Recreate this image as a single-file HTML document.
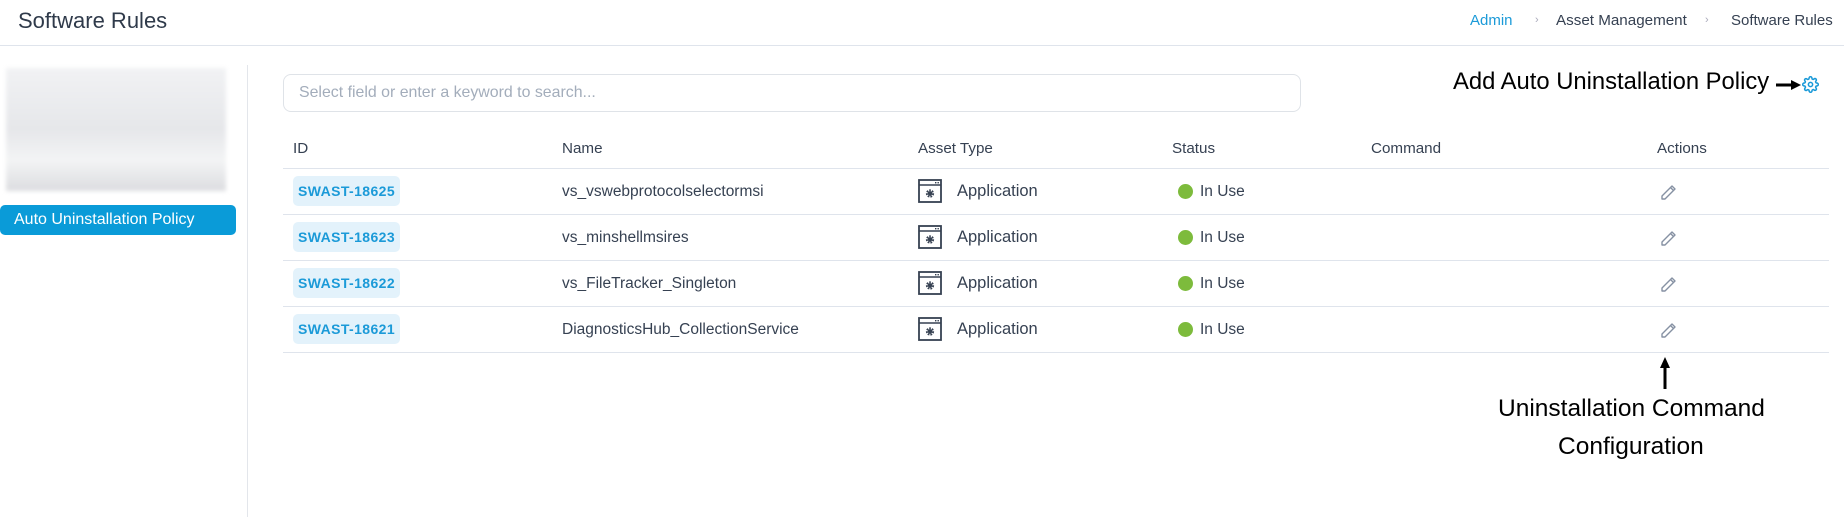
<!DOCTYPE html>
<html><head><meta charset="utf-8"><style>
*{margin:0;padding:0;box-sizing:border-box}
body{width:1844px;height:517px;background:#fff;font-family:"Liberation Sans",sans-serif;color:#364152;position:relative;overflow:hidden}
.a{position:absolute;white-space:nowrap}
.hl{position:absolute;height:1px;background:#dfe4ec}
.badge{position:absolute;left:293px;width:107px;height:30px;background:#e3f2fb;border-radius:5px;color:#1b9ad8;font-size:14px;font-weight:bold;line-height:30px;text-align:center;letter-spacing:.4px;white-space:nowrap}
.t{font-size:15.5px;color:#364152}
.ap{font-size:16.5px}
.iu{font-size:15.5px}
.dot{position:absolute;width:15px;height:15px;border-radius:50%;background:#7dbb3c}
.h{font-size:15.2px;top:140px}
</style></head><body>
<div class="a" style="left:18px;top:8px;font-size:22px;color:#2f3a4a">Software Rules</div>
<div class="a" style="left:1470px;top:12px;font-size:15px;color:#1b9ad8">Admin</div>
<div class="a" style="left:1535px;top:14px;font-size:11px;color:#aab">›</div>
<div class="a" style="left:1556px;top:12px;font-size:15.2px;color:#364152">Asset Management</div>
<div class="a" style="left:1705px;top:14px;font-size:11px;color:#aab">›</div>
<div class="a" style="left:1731px;top:12px;font-size:15px;color:#364152">Software Rules</div>
<div class="hl" style="left:0;top:45px;width:1844px"></div>
<div class="a" style="left:6px;top:68px;width:220px;height:123px;background:linear-gradient(180deg,#f1f2f4,#e6e7ea 50%,#f3f4f5 75%,#dcdde0);filter:blur(2px)"></div>
<div class="a" style="left:0;top:205px;width:236px;height:30px;background:#0a9bd8;border-radius:5px;color:#fff;font-size:16px;line-height:30px;padding-left:14px">Auto Uninstallation Policy</div>
<div class="a" style="left:247px;top:65px;width:1px;height:452px;background:#e3e6eb"></div>
<div class="a" style="left:283px;top:74px;width:1018px;height:38px;border:1px solid #dfe3e8;border-radius:8px;font-size:15.9px;color:#a3adbb;line-height:36px;padding-left:15px">Select field or enter a keyword to search...</div>
<div class="a" style="left:1453px;top:68px;font-size:23.8px;color:#000">Add Auto Uninstallation Policy</div>
<svg class="a" style="left:1776px;top:79px" width="26" height="12"><path d="M0 6H17" stroke="#000" stroke-width="3"/><path d="M15 1L25 6L15 11Z" fill="#000"/></svg>
<svg class="a" style="left:1802px;top:76px" width="17" height="17" viewBox="0 0 24 24" fill="none" stroke="#1b9ad8" stroke-width="2.2"><circle cx="12" cy="12" r="3"/><path d="M19.4 15a1.650 1.650 0 0 0 .33 1.820l.06.06a2 2 0 1 1-2.830 2.830l-.06-.06a1.650 1.650 0 0 0-1.820-.33 1.650 1.650 0 0 0-1 1.510V21a2 2 0 1 1-4 0v-.09A1.650 1.650 0 0 0 9 19.4a1.650 1.650 0 0 0-1.820.33l-.06.06a2 2 0 1 1-2.830-2.830l.06-.06A1.650 1.650 0 0 0 4.680 15a1.650 1.650 0 0 0-1.510-1H3a2 2 0 1 1 0-4h.09A1.650 1.650 0 0 0 4.600 9a1.650 1.650 0 0 0-.33-1.820l-.06-.06a2 2 0 1 1 2.830-2.830l.06.06A1.650 1.650 0 0 0 9 4.680 1.650 1.650 0 0 0 10 3.170V3a2 2 0 1 1 4 0v.09a1.650 1.650 0 0 0 1 1.510 1.650 1.650 0 0 0 1.820-.33l.06-.06a2 2 0 1 1 2.830 2.830l-.06.06A1.650 1.650 0 0 0 19.4 9a1.650 1.650 0 0 0 1.510 1H21a2 2 0 1 1 0 4h-.09a1.650 1.650 0 0 0-1.510 1z"/></svg>
<div class="a h" style="left:293px">ID</div>
<div class="a h" style="left:562px">Name</div>
<div class="a h" style="left:918px">Asset Type</div>
<div class="a h" style="left:1172px">Status</div>
<div class="a h" style="left:1371px">Command</div>
<div class="a h" style="left:1657px">Actions</div>
<div class="hl" style="left:283px;top:168px;width:1546px"></div>
<div class="hl" style="left:283px;top:214px;width:1546px"></div>
<div class="hl" style="left:283px;top:260px;width:1546px"></div>
<div class="hl" style="left:283px;top:306px;width:1546px"></div>
<div class="hl" style="left:283px;top:352px;width:1546px"></div>

<div class="badge" style="top:176px">SWAST-18625</div>
<div class="badge" style="top:222px">SWAST-18623</div>
<div class="badge" style="top:268px">SWAST-18622</div>
<div class="badge" style="top:314px">SWAST-18621</div>
<div class="a t" style="left:562px;top:183px">vs_vswebprotocolselectormsi</div>
<div class="a t" style="left:562px;top:229px">vs_minshellmsires</div>
<div class="a t" style="left:562px;top:275px">vs_FileTracker_Singleton</div>
<div class="a t" style="left:562px;top:321px">DiagnosticsHub_CollectionService</div>

<svg width="0" height="0" style="position:absolute"><defs><g id="app"><rect x="1" y="1" width="22" height="22" fill="none" stroke="#364152" stroke-width="1.8"/><path d="M1 6H23" stroke="#364152" stroke-width="1.5"/><rect x="17" y="3" width="1.4" height="1.4" fill="#364152"/><rect x="19.5" y="3" width="1.4" height="1.4" fill="#364152"/><circle cx="12" cy="14.5" r="3" fill="none" stroke="#364152" stroke-width="2.2" stroke-dasharray="1.6 1"/><circle cx="12" cy="14.5" r="2.2" fill="#364152"/></g>
<g id="pen"><path d="M3 15L13 5l3 3L6 18H3Z M11.5 6.5l3 3" fill="none" stroke="#8691a3" stroke-width="1.4" stroke-linejoin="round"/></g></defs></svg>
<svg class="a" style="left:918px;top:179px" width="25" height="25"><use href="#app"/></svg>
<svg class="a" style="left:918px;top:225px" width="25" height="25"><use href="#app"/></svg>
<svg class="a" style="left:918px;top:271px" width="25" height="25"><use href="#app"/></svg>
<svg class="a" style="left:918px;top:317px" width="25" height="25"><use href="#app"/></svg>
<div class="a t ap" style="left:957px;top:182px">Application</div>
<div class="a t ap" style="left:957px;top:228px">Application</div>
<div class="a t ap" style="left:957px;top:274px">Application</div>
<div class="a t ap" style="left:957px;top:320px">Application</div>
<div class="dot" style="left:1178px;top:184px"></div>
<div class="dot" style="left:1178px;top:230px"></div>
<div class="dot" style="left:1178px;top:276px"></div>
<div class="dot" style="left:1178px;top:322px"></div>
<div class="a t iu" style="left:1200px;top:183px">In Use</div>
<div class="a t iu" style="left:1200px;top:229px">In Use</div>
<div class="a t iu" style="left:1200px;top:275px">In Use</div>
<div class="a t iu" style="left:1200px;top:321px">In Use</div>
<svg class="a" style="left:1659px;top:181px" width="20" height="20"><use href="#pen"/></svg>
<svg class="a" style="left:1659px;top:227px" width="20" height="20"><use href="#pen"/></svg>
<svg class="a" style="left:1659px;top:273px" width="20" height="20"><use href="#pen"/></svg>
<svg class="a" style="left:1659px;top:319px" width="20" height="20"><use href="#pen"/></svg>
<svg class="a" style="left:1658px;top:356px" width="14" height="34"><path d="M7 33V10" stroke="#000" stroke-width="3"/><path d="M2 12L7 1L12 12Z" fill="#000"/></svg>
<div class="a" style="left:1498px;top:395px;font-size:24.5px;color:#000">Uninstallation Command</div>
<div class="a" style="left:1558px;top:433px;font-size:24.5px;color:#000">Configuration</div>
</body></html>
